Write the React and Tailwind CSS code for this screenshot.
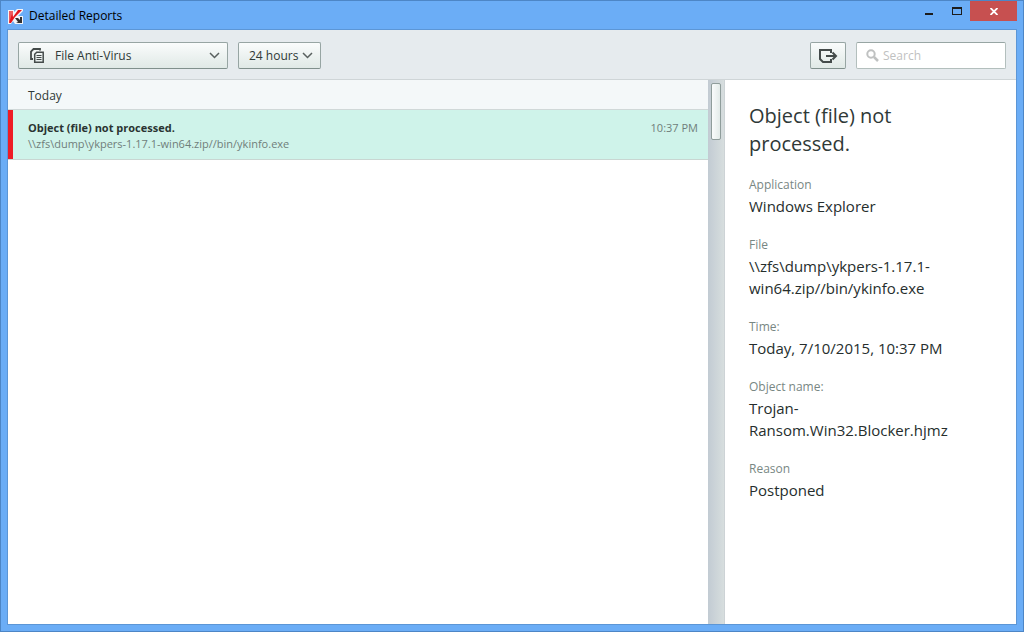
import React from 'react';

const periods = ['24 hours', '7 days', '30 days'];
const components = ['File Anti-Virus', 'Mail Anti-Virus', 'Web Anti-Virus'];

const details = [
  { label: 'Application', value: 'Windows Explorer' },
  { label: 'File', value: '\\\\zfs\\dump\\ykpers-1.17.1-win64.zip//bin/ykinfo.exe' },
  { label: 'Time:', value: 'Today, 7/10/2015, 10:37 PM' },
  { label: 'Object name:', value: 'Trojan-Ransom.Win32.Blocker.hjmz' },
  { label: 'Reason', value: 'Postponed' },
];

const events = [
  {
    id: 1,
    title: 'Object (file) not processed.',
    path: '\\\\zfs\\dump\\ykpers-1.17.1-win64.zip//bin/ykinfo.exe',
    time: '10:37 PM',
  },
];

const AppLogo = () => (
  <svg width="15" height="15" viewBox="0 0 15 15" aria-hidden="true">
    <path d="M0 1h6v2l3-3h6v2L10 7h5v8H7l-2-3-2 3H0z" fill="#f4f4f6" />
    <path d="M1 2h4v5l-3 6H1z" fill="#ee5a5e" />
    <path d="M4 5l1 3 5-7h4L7 8l-4 6H1z" fill="#e3151b" />
    <path d="M7 9h3l2 2V8h2v6H8l2-1z" fill="#33302f" />
  </svg>
);

const FilesIcon = () => (
  <svg width="16" height="16" viewBox="0 0 16 16" fill="none" stroke="#444b4a" aria-hidden="true">
    <path d="M4 12H2V4.500L4.500 2H11v1.500" strokeWidth="1.800" />
    <path d="M5.700 15.200V7.200L7.700 5.200H14.200v10z" strokeWidth="1.500" />
    <path d="M7.500 8.500h5M7.500 10.500h5M7.500 12.500h5" strokeWidth="1" />
  </svg>
);

const Chevron = () => (
  <svg
    className="pointer-events-none absolute right-2 top-2.5"
    width="11"
    height="7"
    viewBox="0 0 11 7"
    fill="none"
    stroke="#59605f"
    strokeWidth="1.500"
    aria-hidden="true"
  >
    <path d="M1 1l4.500 4.500L10 1" />
  </svg>
);

const ExportIcon = () => (
  <svg width="19" height="16" viewBox="0 0 19 16" fill="none" stroke="#444b4a" strokeWidth="2" aria-hidden="true">
    <path d="M12 5V2H1v9l3 3h8v-3" />
    <path d="M7 8h10M13.500 4.500L17 8l-3.500 3.500" />
  </svg>
);

const SearchIcon = () => (
  <svg
    className="pointer-events-none absolute left-2.5 top-[7px]"
    width="13"
    height="13"
    viewBox="0 0 13 13"
    fill="none"
    stroke="#bfc1c1"
    aria-hidden="true"
  >
    <circle cx="5" cy="5" r="3.700" strokeWidth="2" />
    <path d="M8 8l4 4" strokeWidth="2.500" />
  </svg>
);

const buttonSkin =
  'rounded-xs border border-[#97a5a3] border-b-[#80908c] bg-linear-to-b from-[#fafcfc] to-[#e0e9e6] text-[#2f3937]';

const Select = ({ label, options, className, icon }) => (
  <div className="relative">
    {icon && <span className="pointer-events-none absolute left-[11px] top-[5px]">{icon}</span>}
    <select aria-label={label} className={`block h-[27px] appearance-none text-xs ${buttonSkin} ${className}`}>
      {options.map((option) => (
        <option key={option}>{option}</option>
      ))}
    </select>
    <Chevron />
  </div>
);

const TitleBar = () => (
  <header className="flex h-7 items-start justify-between">
    <div className="flex h-7 items-center gap-1.5 pl-[7px] pt-0.5">
      <AppLogo />
      <h1 className="text-xs text-black">Detailed Reports</h1>
    </div>
    <div className="flex pr-1.5">
      <button aria-label="Minimize" className="flex h-5 w-7 items-center justify-center">
        <svg width="8" height="8" viewBox="0 0 8 8">
          <path d="M0 6h8v2H0z" fill="#1c1c1c" />
        </svg>
      </button>
      <button aria-label="Maximize" className="flex h-5 w-[27px] items-center justify-center">
        <svg width="10" height="8" viewBox="0 0 10 8">
          <path d="M0 0h10v8H0zM1 2v5h8V2z" fill="#1c1c1c" fillRule="evenodd" />
        </svg>
      </button>
      <button aria-label="Close" className="flex h-5 w-[47px] items-center justify-center bg-[#c75050]">
        <svg width="8" height="7" viewBox="0 0 8 7" stroke="#fff" strokeWidth="1.800">
          <path d="M0.500 0l7 7M7.500 0l-7 7" />
        </svg>
      </button>
    </div>
  </header>
);

const Toolbar = () => (
  <div className="flex items-center justify-between border-b border-[#cfd5d7] bg-[#e6ebee] px-2.5 pb-2.5 pt-3">
    <div className="flex gap-2.5">
      <Select label="Component" options={components} icon={<FilesIcon />} className="w-[210px] pl-9" />
      <Select label="Period" options={periods} className="w-[83px] pl-2.5" />
    </div>
    <div className="flex gap-2.5">
      <button aria-label="Export report" className={`flex h-[27px] w-9 items-center justify-center ${buttonSkin}`}>
        <ExportIcon />
      </button>
      <div className="relative">
        <SearchIcon />
        <input
          type="search"
          aria-label="Search"
          placeholder="Search"
          className="block h-[27px] w-[150px] rounded-xs border border-[#b3bfbd] border-t-[#97a5a3] bg-white pl-[26px] pr-2 text-xs placeholder:text-[#bfc1c1]"
        />
      </div>
    </div>
  </div>
);

const EventList = () => (
  <main className="min-w-0 flex-1">
    <h2 className="flex h-[30px] items-center border-b border-[#d0d8d8] bg-[#f4f8f9] px-5 pt-0.5 text-xs text-[#2f3937]">
      Today
    </h2>
    <ul>
      {events.map((event) => (
        <li key={event.id} className="flex border-b border-[#c9d6d2] bg-[#cff3ea]">
          <span className="w-[5px] bg-[#ee1c25]" />
          <div className="flex flex-1 justify-between pb-[7px] pl-[15px] pr-2.5 pt-2.5 text-[11px] leading-4">
            <div>
              <p className="font-bold text-[#2a3332]">{event.title}</p>
              <p className="text-[#6f7e7a]">{event.path}</p>
            </div>
            <time className="text-[#6f7e7a]">{event.time}</time>
          </div>
        </li>
      ))}
    </ul>
  </main>
);

const DetailsPane = () => (
  <aside className="w-[291px] shrink-0 px-6 pt-[22px]">
    <h2 className="max-w-52 text-xl leading-7 text-[#2f3937]">Object (file) not processed.</h2>
    <dl className="mt-[17px] flex max-w-52 flex-col gap-[18px]">
      {details.map(({ label, value }) => (
        <div key={label}>
          <dt className="text-xs leading-5 text-[#788783]">{label}</dt>
          <dd className="text-[15px] leading-[22px] text-[#262e2d]">{value}</dd>
        </div>
      ))}
    </dl>
  </aside>
);

export default function App() {
  return (
    <div className="flex min-h-screen flex-col border border-[#4d86c6] bg-[#6badf6] font-['Open_Sans','Noto_Sans',sans-serif]">
      <TitleBar />
      <div className="mx-1.5 mb-1.5 flex flex-1 flex-col border border-[#5c96d6] bg-white">
        <Toolbar />
        <div className="flex flex-1">
          <EventList />
          <div className="w-[17px] shrink-0 border-r border-[#cdd3d6] bg-linear-to-r from-[#c2cbd3] to-[#d7dede] px-[3px] pt-[3px]">
            <div className="h-[57px] w-2.5 rounded-xs border border-[#8f9d9b] bg-linear-to-r from-[#fafcfc] to-[#e3ebe9]" />
          </div>
          <DetailsPane />
        </div>
      </div>
    </div>
  );
}
